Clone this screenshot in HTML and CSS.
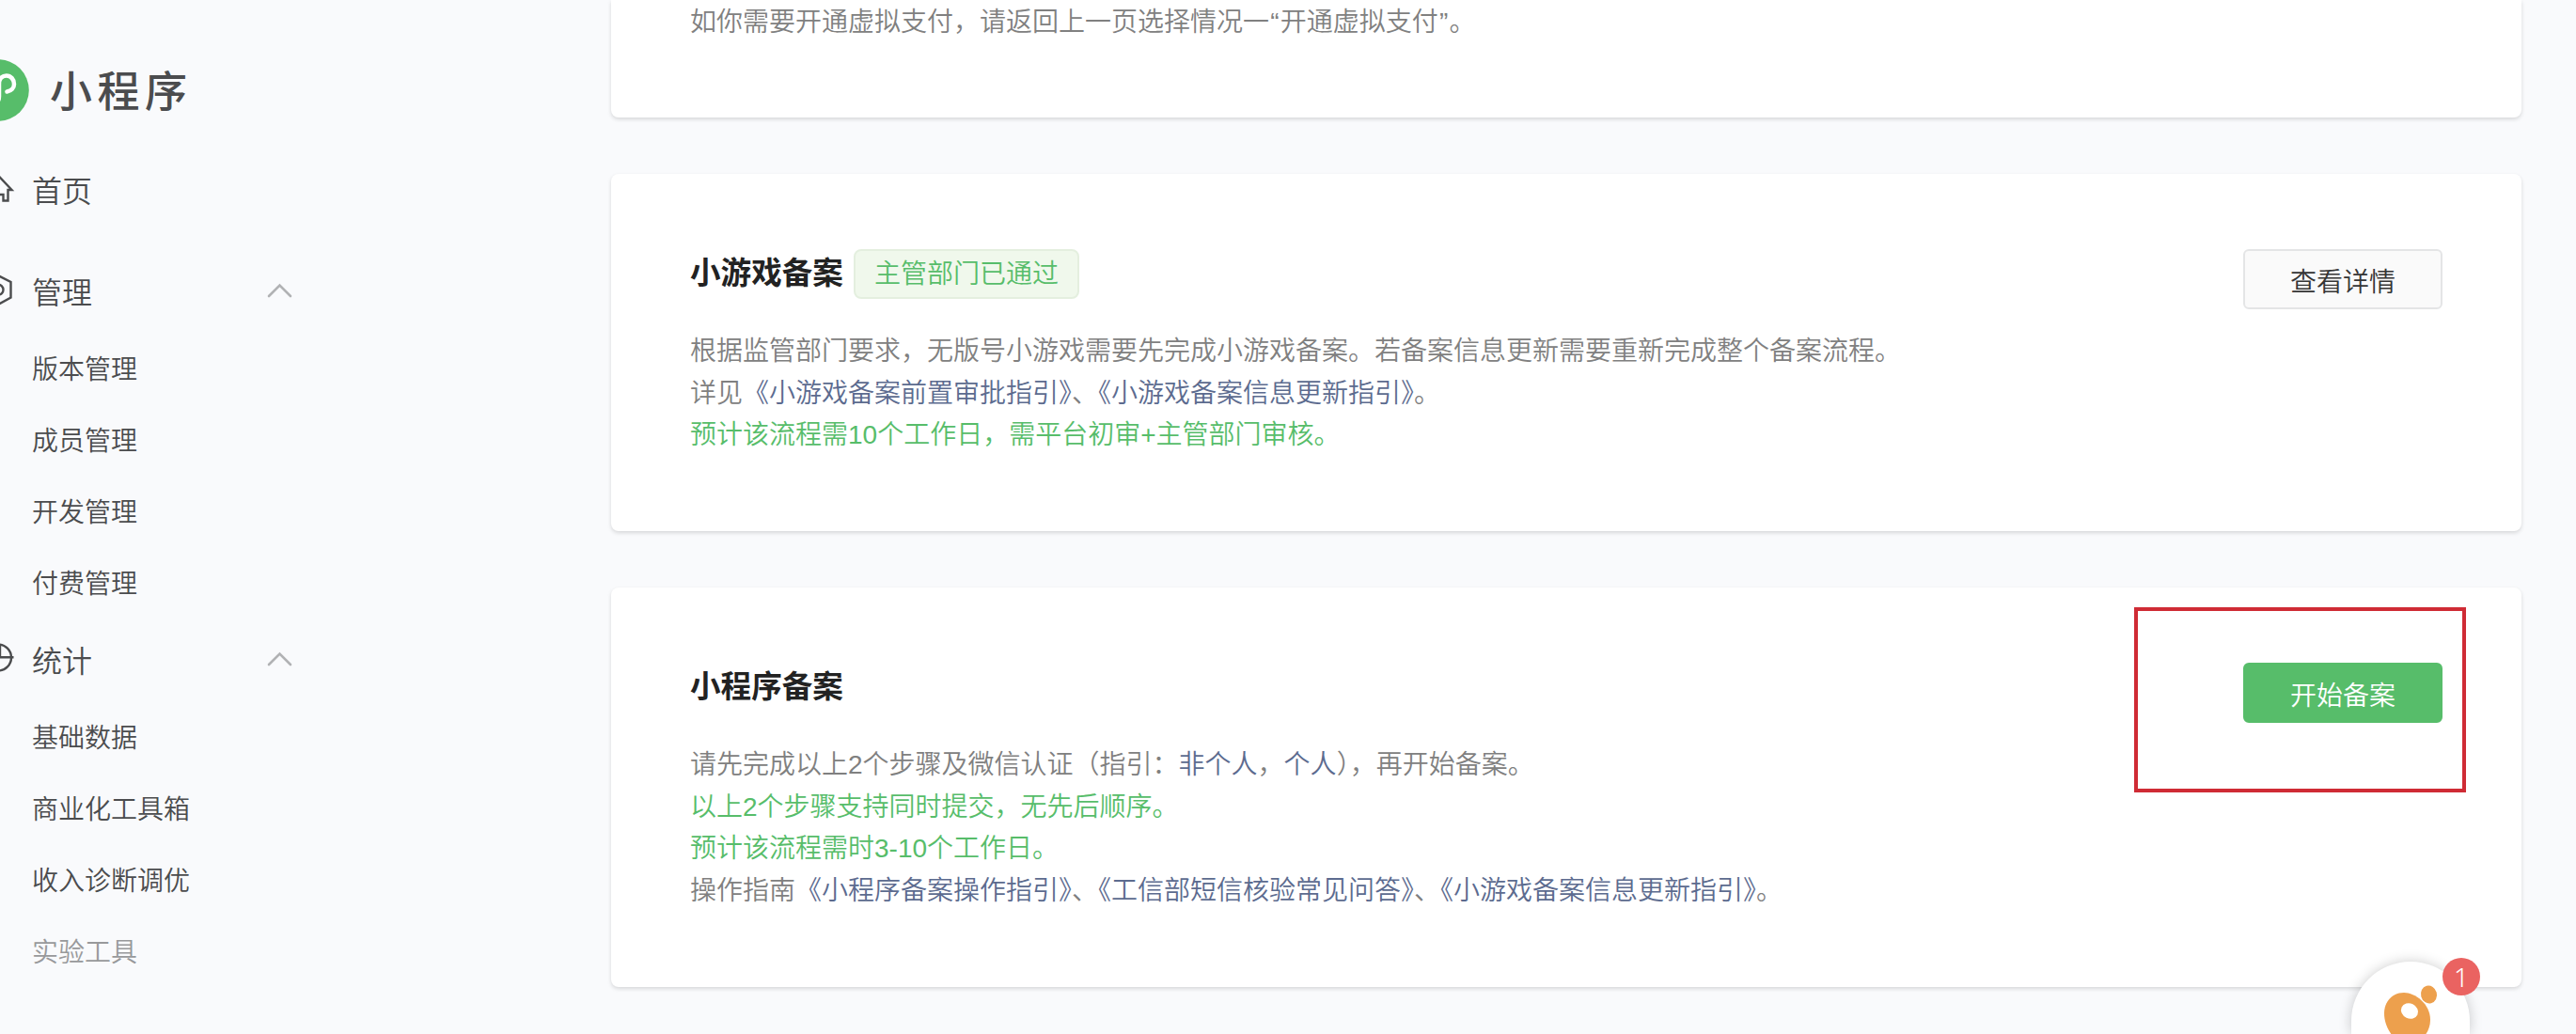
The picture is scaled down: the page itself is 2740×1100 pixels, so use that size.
FILE: index.html
```html
<!DOCTYPE html>
<html lang="zh-CN">
<head>
    <meta charset="UTF-8">
    <meta name="viewport" content="width=device-width, initial-scale=1.0">
    <title>小程序</title>
    <link rel="stylesheet" href="styles.css">
</head>
<body>
    <div class="page">
        <aside class="sidebar">
            <div class="logo">
                <svg class="logo-icon" width="66" height="66" viewBox="0 0 66 66">
                    <circle cx="33" cy="33" r="32.8" fill="#57bd6a"/>
                    <path d="M42.5 34.500c4.500-.8 7.500-4 7.500-8 0-5-3.500-9-8.200-9s-7.800 3.500-7.800 9v13c0 5.500-3.300 9-7.800 9s-8.200-4-8.200-9c0-4 3-7.200 7.500-8" fill="none" stroke="#fff" stroke-width="4.500" stroke-linecap="round"/>
                </svg>
                <span class="logo-text">小程序</span>
            </div>
            <div class="menu-title">
                <svg class="menu-icon" width="36" height="36" viewBox="0 0 36 36">
                    <path d="M16 3.500L30.500 19H26.500V30.500H21.500V24H10.500V30.500H5.500V19H1.500Z"/>
                </svg>
                <span>首页</span>
            </div>
            <div class="menu-title">
                <svg class="menu-icon" width="36" height="36" viewBox="0 0 36 36">
                    <path d="M16 2L29.500 9V25.500L16 33L2.500 25.500V9Z"/>
                    <circle cx="16" cy="17.200" r="5.500"/>
                </svg>
                <span>管理</span>
                <svg class="arrow" width="27" height="16" viewBox="0 0 27 16"><path d="M2 14L13.500 2.500L25 14"/></svg>
            </div>
            <ul class="submenu">
                <li>版本管理</li>
                <li>成员管理</li>
                <li>开发管理</li>
                <li>付费管理</li>
            </ul>
            <div class="menu-title">
                <svg class="menu-icon" width="36" height="36" viewBox="0 0 36 36">
                    <circle cx="16" cy="16.500" r="14"/>
                    <path d="M18 3V16.200H32.500"/>
                </svg>
                <span>统计</span>
                <svg class="arrow" width="27" height="16" viewBox="0 0 27 16"><path d="M2 14L13.500 2.500L25 14"/></svg>
            </div>
            <ul class="submenu">
                <li>基础数据</li>
                <li>商业化工具箱</li>
                <li>收入诊断调优</li>
                <li class="faded">实验工具</li>
            </ul>
        </aside>

        <main class="content">
            <section class="card card-first">
                <p>如你需要开通虚拟支付，请返回上一页选择情况一<span class="quote">“</span>开通虚拟支付<span class="quote">”</span>。</p>
            </section>

            <section class="card card-game">
                <div class="card-body">
                    <h3>小游戏备案<span class="tag">主管部门已通过</span></h3>
                    <p>根据监管部门要求，无版号小游戏需要先完成小游戏备案。若备案信息更新需要重新完成整个备案流程。</p>
                    <p>详见<a>《小游戏备案前置审批指引》</a>、<a>《小游戏备案信息更新指引》</a>。</p>
                    <p class="green">预计该流程需10个工作日，需平台初审+主管部门审核。</p>
                </div>
                <button class="btn">查看详情</button>
            </section>

            <section class="card card-app">
                <div class="card-body">
                    <h3>小程序备案</h3>
                    <p>请先完成以上2个步骤及微信认证（指引：<a>非个人</a>，<a>个人</a>），再开始备案。</p>
                    <p class="green">以上2个步骤支持同时提交，无先后顺序。</p>
                    <p class="green">预计该流程需时3-10个工作日。</p>
                    <p>操作指南<a>《小程序备案操作指引》</a>、<a>《工信部短信核验常见问答》</a>、<a>《小游戏备案信息更新指引》</a>。</p>
                </div>
                <button class="btn btn-primary">开始备案</button>
                <div class="highlight"></div>
            </section>
        </main>
    </div>

    <div class="service">
        <svg width="126" height="77" viewBox="0 0 126 77">
            <path d="M56 33C68 33 84 45 84 62C84 77 72 88 60 88C48 88 35 72 35 55C35 42 44 33 56 33Z" fill="#eda04d"/>
            <ellipse cx="62" cy="52.500" rx="9.300" ry="8" transform="rotate(25 62 52.500)" fill="#fff"/>
            <ellipse cx="82.500" cy="35" rx="8.500" ry="9.500" transform="rotate(-15 82.500 35)" fill="#eda04d"/>
        </svg>
        <span class="badge">1</span>
    </div>
</body>
</html>
```
FILE: styles.css
```css
* {
    box-sizing: border-box;
    margin: 0;
    padding: 0;
}
body {
    position: relative;
    height: 1100px;
    overflow: hidden;
    font-family: "Liberation Sans", "Noto Sans CJK SC", sans-serif;
    font-size: 28px;
    font-weight: 350;
    color: #808080;
    background-color: #f9fafc;
}
.page {
    display: flex;
    height: 1100px;
    overflow: hidden;
}

/* sidebar */
.sidebar {
    width: 650px;
    padding-top: 63px;
    color: #4b4c4e;
}
.logo {
    display: flex;
    align-items: center;
    height: 66px;
    margin-left: -35px;
    margin-bottom: 18px;
}
.logo-text {
    margin-left: 22px;
    padding-bottom: 4px;
    font-size: 45px;
    font-weight: 500;
    letter-spacing: 5.500px;
}
.menu-title {
    display: flex;
    align-items: center;
    width: 312px;
    height: 108px;
    margin-left: -18px;
    font-size: 32px;
}
.menu-title span {
    margin-left: 16px;
    padding-bottom: 1px;
}
.menu-icon {
    fill: none;
    stroke: #4b4c4e;
    stroke-width: 2.4;
}
.arrow {
    margin-left: auto;
    margin-right: -17px;
    fill: none;
    stroke: #b1b2b4;
    stroke-width: 2.6;
    stroke-linecap: round;
}
.submenu {
    list-style: none;
    padding-left: 34px;
    margin-top: -7px;
    margin-bottom: -13px;
}
.submenu li {
    height: 76px;
    line-height: 76px;
}
.submenu .faded {
    color: #98999b;
}

/* cards */
.content {
    width: 2032px;
}
.card {
    position: relative;
    display: flex;
    justify-content: space-between;
    align-items: flex-start;
    margin-bottom: 60px;
    padding: 80px 84px;
    background-color: #fff;
    border-radius: 8px;
    box-shadow: 0 2px 4px rgba(0, 0, 0, 0.14);
}
.card-first {
    height: 125px;
    padding-top: 2px;
    border-radius: 0 0 8px 8px;
}
.card-game {
    height: 380px;
}
.card-app {
    height: 425px;
}
.card h3 {
    display: flex;
    height: 53px;
    margin-bottom: 34px;
    font-size: 32.600px;
    font-weight: 700;
    line-height: 51px;
    color: #222;
}
.card p {
    height: 44.700px;
    line-height: 44.700px;
    white-space: nowrap;
}
.card a {
    color: #5c6b8f;
}
.card .green {
    color: #57bd6a;
}
.quote {
    margin: 0 1.200px;
}
.tag {
    height: 53px;
    margin-left: 11px;
    padding: 0 20px;
    font-size: 28px;
    font-weight: 350;
    line-height: 49px;
    color: #57bd6a;
    background-color: #f0f8ec;
    border: 2px solid #e4efdf;
    border-radius: 8px;
}
.btn {
    width: 212px;
    height: 64px;
    font-family: inherit;
    font-size: 28px;
    font-weight: 350;
    color: #353535;
    padding-top: 1px;
    background-color: #fafafa;
    border: 2px solid #e4e5e6;
    border-radius: 6px;
}
.btn-primary {
    color: #fff;
    background-color: #57bd6a;
    border-color: #57bd6a;
}
.highlight {
    position: absolute;
    top: 21px;
    right: 59px;
    width: 353px;
    height: 197px;
    border: 4px solid #cf2b35;
}

/* floating service button */
.service {
    position: absolute;
    left: 2501px;
    bottom: 0;
    width: 126px;
    height: 77px;
    background-color: #fff;
    border-radius: 63px 63px 0 0;
    box-shadow: 0 0 14px rgba(0, 0, 0, 0.2);
}
.badge {
    position: absolute;
    top: -4px;
    right: -11px;
    width: 40px;
    height: 40px;
    font-family: "Noto Sans", sans-serif;
    font-size: 28px;
    line-height: 40px;
    text-align: center;
    color: #fff;
    background-color: #ea6361;
    border-radius: 50%;
}
```
